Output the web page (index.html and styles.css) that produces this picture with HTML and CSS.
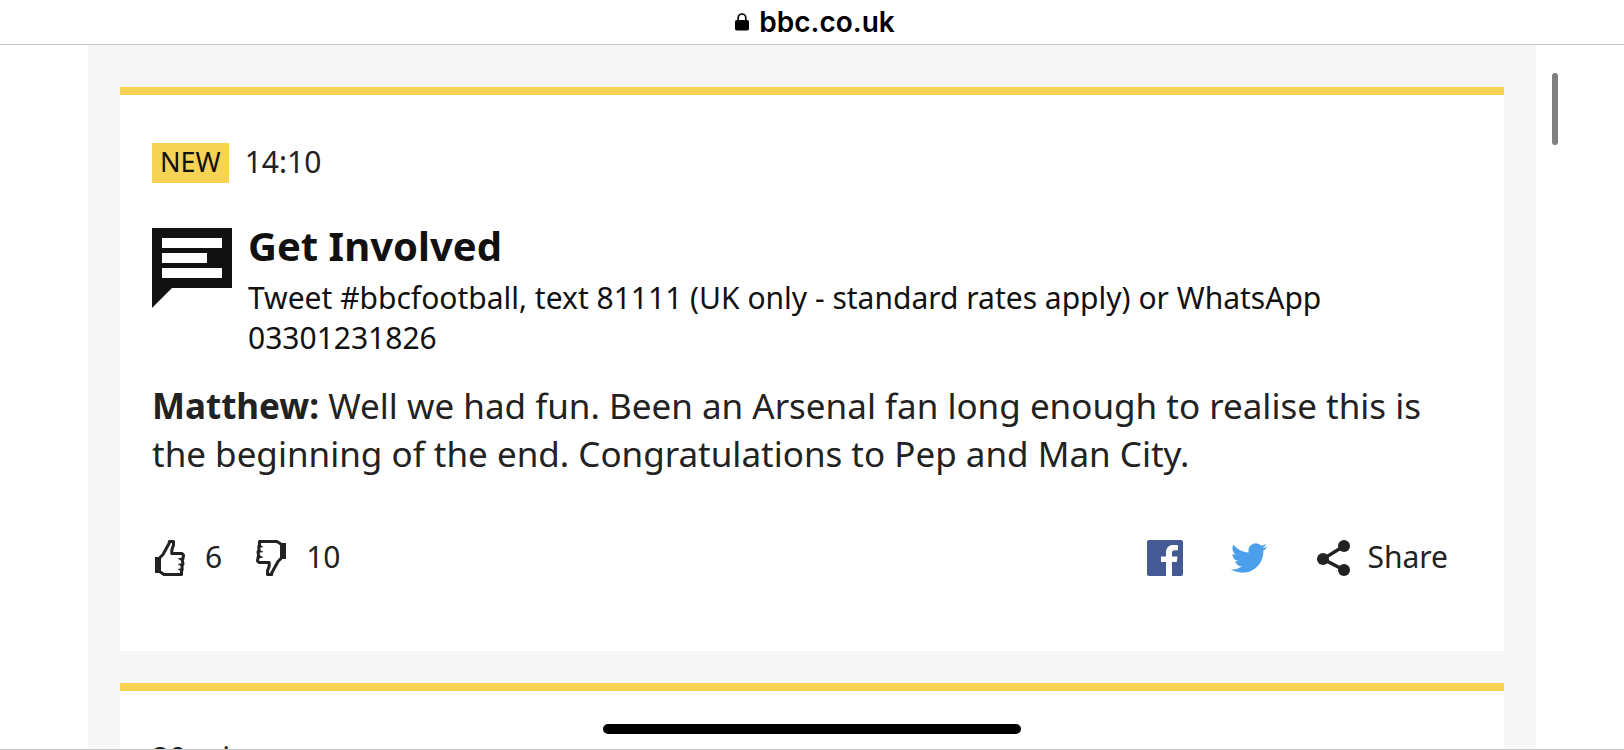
FILE: index.html
```html
<!DOCTYPE html>
<html lang="en">
<head>
<meta charset="utf-8">
<meta name="viewport" content="width=device-width, initial-scale=1">
<title>bbc.co.uk</title>
<link rel="stylesheet" href="styles.css">
</head>
<body>
<header class="address">
  <svg class="lock" viewBox="0 0 14 18" aria-hidden="true"><path d="M3.200 8V5a3.800 4 0 0 1 7.600 0v3" fill="none" stroke="#000" stroke-width="1.700"/><rect y="7" width="14" height="10.500" rx="1.800"/></svg>
  <span>bbc.co.uk</span>
</header>
<main class="stream">
  <article class="post">
    <div class="meta"><span class="badge">NEW</span><time>14:10</time></div>
    <div class="intro">
      <svg class="bubble" viewBox="0 0 80 80" aria-hidden="true"><path fill="#111" d="M0 0h80v60H20L0 80z"/><path fill="#fff" d="M10 10h60v10H10zM10 25h45v10H10zM10 40h60v10H10z"/></svg>
      <div>
        <h2 class="title">Get Involved</h2>
        <p class="contact">Tweet #bbcfootball, text 81111 (UK only - standard rates apply) or WhatsApp 03301231826</p>
      </div>
    </div>
    <p class="comment"><strong>Matthew:</strong> Well we had fun. Been an Arsenal fan long enough to realise this is the beginning of the end. Congratulations to Pep and Man City.</p>
    <footer class="actions">
      <button class="vote" type="button" aria-label="Like, 6">
        <svg class="thumb" viewBox="0 0 30 36" aria-hidden="true"><path fill="none" stroke="#222" stroke-width="3" stroke-linejoin="round" d="M4.500 18 8 14.500 14.300 3V1.500H18.500V5L16.800 10V13.500H27L28.500 15 28 18.500 27.300 20 28 24 27 26 27.200 29.500 26.500 31V34.500H9L4.500 31.500z"/><path fill="#222" d="M0 17h5.500v16H0zM28 17.500l-5.500 1 5 3zM28 23l-5.500 1 5 3zM27.500 28l-5 1 4.500 3z"/></svg>
        <span>6</span>
      </button>
      <button class="vote" type="button" aria-label="Dislike, 10">
        <svg class="thumb flipped" viewBox="0 0 30 36" aria-hidden="true"><path fill="none" stroke="#222" stroke-width="3" stroke-linejoin="round" d="M4.500 18 8 14.500 14.300 3V1.500H18.500V5L16.800 10V13.500H27L28.500 15 28 18.500 27.300 20 28 24 27 26 27.200 29.500 26.500 31V34.500H9L4.500 31.500z"/><path fill="#222" d="M0 17h5.500v16H0zM28 17.500l-5.500 1 5 3zM28 23l-5.500 1 5 3zM27.500 28l-5 1 4.500 3z"/></svg>
        <span>10</span>
      </button>
      <div class="social">
        <a href="#facebook" aria-label="Share on Facebook"><svg class="icon" viewBox="0 0 36 36" aria-hidden="true"><rect width="36" height="36" rx="2" fill="#435a94"/><path fill="#fff" d="M19 36V22h-5v-5.500h5v-4c0-5 3-7.500 7.500-7.500 2 0 3.500.1 4.500.3v5h-3c-2.400 0-3 1.100-3 2.800v3.400h5.500L29.800 22H25v14z"/></svg></a>
        <a href="#twitter" aria-label="Share on Twitter"><svg class="icon" viewBox="0 0 24 24" aria-hidden="true"><path fill="#4c9feb" d="M23.953 4.570a10 10 0 0 1-2.825.775 4.958 4.958 0 0 0 2.163-2.723c-.951.555-2.005.959-3.127 1.184a4.920 4.920 0 0 0-8.384 4.482C7.690 8.095 4.067 6.130 1.640 3.162a4.822 4.822 0 0 0-.666 2.475c0 1.710.870 3.213 2.188 4.096a4.904 4.904 0 0 1-2.228-.616v.060a4.923 4.923 0 0 0 3.946 4.827 4.996 4.996 0 0 1-2.212.085 4.936 4.936 0 0 0 4.604 3.417 9.867 9.867 0 0 1-6.102 2.105c-.390 0-.779-.023-1.170-.067a13.995 13.995 0 0 0 7.557 2.209c9.053 0 13.998-7.496 13.998-13.985 0-.210 0-.420-.015-.630A9.935 9.935 0 0 0 24 4.590z"/></svg></a>
        <button class="share" type="button"><svg class="icon" viewBox="0 0 36 36" aria-hidden="true"><path fill="none" stroke="#222" stroke-width="3.500" d="M29 6 8 19l21 11"/><g fill="#222"><circle cx="29" cy="6" r="6"/><circle cx="8" cy="19" r="6"/><circle cx="29" cy="30" r="6"/></g></svg><span>Share</span></button>
      </div>
    </footer>
  </article>
  <article class="post">
    <div class="meta"><time>20 mins</time></div>
  </article>
</main>
<div class="scrollbar"></div>
<div class="home-bar"></div>
</body>
</html>
```
FILE: styles.css
```css
* { box-sizing: border-box; }
html { height: 100%; }
body {
  height: 100%;
  margin: 0;
  display: flex;
  flex-direction: column;
  overflow: hidden;
  background: #fff;
  border-bottom: 1px solid #c8c8c8;
  color: #222;
  font-family: "Noto Sans", sans-serif;
}
h2, p { margin: 0; }
button {
  padding: 0;
  border: 0;
  background: none;
  color: inherit;
  font: inherit;
}
svg { display: block; flex: none; }
.address {
  flex: none;
  display: flex;
  align-items: center;
  justify-content: center;
  gap: 10px;
  height: 45px;
  padding-left: 6px;
  border-bottom: 1px solid #c4c4c4;
  color: #000;
  font: 600 28px/44px Inter, sans-serif;
}
.lock { width: 14px; height: 18px; }
.stream {
  flex: 1;
  min-height: 0;
  display: flex;
  flex-direction: column;
  gap: 32px;
  margin: 0 88px;
  padding: 42px 32px 0;
  overflow: hidden;
  background: #f6f6f6;
}
.post {
  flex: none;
  padding: 48px 32px 73px;
  border-top: 8px solid #f6d355;
  background: #fff;
}
.meta {
  display: flex;
  align-items: center;
  gap: 16px;
  font-size: 30px;
  line-height: 38px;
}
.meta time { padding-bottom: 2px; }
.badge {
  padding: 0 8px 2px;
  background: #f6d355;
  color: #111;
  font-size: 27px;
  line-height: 38px;
}
.intro {
  display: flex;
  gap: 16px;
  margin-top: 43px;
  color: #111;
}
.bubble { width: 80px; height: 80px; margin-top: 2px; }
.title { font-size: 40px; line-height: 40px; }
.contact { margin-top: 12px; font-size: 30px; line-height: 40px; }
.comment { margin-top: 24px; font-size: 35px; line-height: 48px; }
.actions {
  display: flex;
  align-items: center;
  gap: 34px;
  margin-top: 60px;
  padding: 0 24px 0 3px;
  font-size: 30px;
  line-height: 40px;
}
.vote { display: flex; align-items: center; gap: 20px; }
.vote span, .share span { padding-bottom: 2px; line-height: 38px; }
.thumb { width: 30px; height: 36px; }
.flipped { transform: rotate(180deg); }
.social { display: flex; align-items: center; gap: 48px; margin-left: auto; }
.icon { width: 36px; height: 36px; }
.share { display: flex; align-items: center; gap: 16px; }
.scrollbar {
  position: absolute;
  top: 73px;
  right: 66px;
  width: 6px;
  height: 72px;
  border-radius: 3px;
  background: #808080;
}
.home-bar {
  position: absolute;
  bottom: 16px;
  left: 50%;
  width: 418px;
  height: 10px;
  margin-left: -209px;
  border-radius: 5px;
  background: #000;
}
```
